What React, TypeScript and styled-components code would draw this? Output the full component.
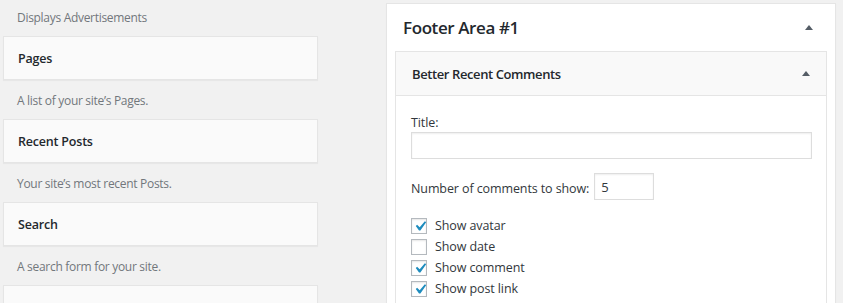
import React from 'react';
import styled, { createGlobalStyle } from 'styled-components';

const GlobalStyle = createGlobalStyle`
  html, body {
    margin: 0;
    padding: 0;
    background: #f1f1f1;
  }
  body {
    font-family: 'Open Sans', 'Noto Sans', sans-serif;
    font-size: 12.5px;
    letter-spacing: -0.1px;
    color: #23282d;
  }
`;

const Page = styled.div`
  display: flex;
  align-items: flex-start;
  width: 843px;
  height: 303px;
  overflow: hidden;
`;

const AvailableList = styled.div`
  width: 315px;
  margin-left: 3px;
  flex-shrink: 0;
`;

const WidgetTop = styled.div`
  box-sizing: border-box;
  height: 44px;
  background: #fafafa;
  border: 1px solid #e5e5e5;
  box-shadow: 0 1px 1px rgba(0, 0, 0, 0.04);
  padding: 3px 14px 0;
  display: flex;
  align-items: center;
`;

const WidgetTitle = styled.h3`
  margin: 0;
  font-size: 12.5px;
  letter-spacing: -0.2px;
  font-weight: 600;
  line-height: 1;
  color: #23282d;
`;

const Description = styled.div<{ $first?: boolean }>`
  color: #72777c;
  font-size: 12px;
  letter-spacing: -0.3px;
  line-height: 18px;
  padding: ${p => (p.$first ? '9px' : '12px')} 14px 9px 14px;
`;

const Sidebar = styled.div`
  box-sizing: border-box;
  width: 450px;
  margin-left: 68px;
  margin-top: 3px;
  background: #fff;
  border: 1px solid #e5e5e5;
  box-shadow: 0 1px 1px rgba(0, 0, 0, 0.04);
  padding: 0 8px;
  min-height: 320px;
`;

const SidebarHeader = styled.div`
  display: flex;
  align-items: center;
  justify-content: space-between;
  height: 47px;
  padding: 0 14px 0 8px;
`;

const SidebarName = styled.h2`
  margin: 0;
  font-size: 17px;
  letter-spacing: -0.4px;
  font-weight: 600;
  line-height: 1;
  color: #23282d;
`;

const Arrow = styled.span`
  display: block;
  width: 0;
  height: 0;
  border-left: 4px solid transparent;
  border-right: 4px solid transparent;
  border-bottom: 5px solid #555d66;
`;

const Widget = styled.div`
  border: 1px solid #e5e5e5;
  background: #fff;
`;

const WidgetHeader = styled.div`
  display: flex;
  align-items: center;
  justify-content: space-between;
  height: 43px;
  background: #f9f9f9;
  border-bottom: 1px solid #e5e5e5;
  padding: 0 16px;
`;

const WidgetHeaderTitle = styled.h3`
  margin: 1px 0 0;
  font-size: 13px;
  letter-spacing: -0.4px;
  font-weight: 600;
  line-height: 1;
  color: #23282d;
`;

const WidgetInside = styled.div`
  padding: 18px 14px 15px 15px;
`;

const FieldLabel = styled.label`
  display: block;
  line-height: 18px;
  color: #32373c;
`;

const TextInput = styled.input`
  box-sizing: border-box;
  display: block;
  width: 100%;
  height: 27px;
  margin: 0;
  border: 1px solid #ddd;
  box-shadow: inset 0 1px 2px rgba(0, 0, 0, 0.07);
  background: #fff;
  font-family: inherit;
  font-size: 13px;
  color: #32373c;
  padding: 0 6px;
  outline: none;
`;

const NumberRow = styled.div`
  display: flex;
  align-items: center;
  gap: 5px;
  margin-top: 14px;
`;

const InlineLabel = styled.label`
  line-height: 18px;
  color: #32373c;
  margin-top: 5px;
`;

const SmallInput = styled(TextInput)`
  width: 60px;
`;

const CheckList = styled.div`
  margin-top: 18px;
  display: flex;
  flex-direction: column;
  gap: 5px;
`;

const CheckRow = styled.label`
  display: flex;
  align-items: center;
  gap: 8px;
  height: 16px;
  line-height: 16px;
  color: #32373c;
`;

const Box = styled.span`
  box-sizing: border-box;
  display: block;
  width: 16px;
  height: 16px;
  border: 1px solid #b4b9be;
  background: #fff;
  box-shadow: inset 0 1px 2px rgba(0, 0, 0, 0.1);
  flex-shrink: 0;
`;

const Check = () => (
  <svg width="14" height="14" viewBox="2 2.6 14 14" style={{ display: 'block' }}>
    <path d="M14.83 4.89l1.34.94-5.81 8.38H9.02L5.78 9.67l1.34-1.25 2.57 2.4z" fill="#1e8cbe" />
  </svg>
);

const Checkbox: React.FC<{ checked?: boolean; label: string }> = ({ checked, label }) => (
  <CheckRow>
    <Box>{checked && <Check />}</Box>
    {label}
  </CheckRow>
);

// last box is cut off by the bottom edge, its title lies below the frame
const available = [
  { title: 'Pages', desc: 'A list of your site\u2019s Pages.' },
  { title: 'Recent Posts', desc: 'Your site\u2019s most recent Posts.' },
  { title: 'Search', desc: 'A search form for your site.' },
  { title: '', desc: '' },
];

export default function App() {
  return (
    <>
      <GlobalStyle />
      <Page>
        <AvailableList>
          <Description $first>Displays Advertisements</Description>
          {available.map((w, i) => (
            <React.Fragment key={i}>
              <WidgetTop>
                <WidgetTitle>{w.title}</WidgetTitle>
              </WidgetTop>
              {w.desc && <Description>{w.desc}</Description>}
            </React.Fragment>
          ))}
        </AvailableList>
        <Sidebar>
          <SidebarHeader>
            <SidebarName>Footer Area #1</SidebarName>
            <Arrow />
          </SidebarHeader>
          <Widget>
            <WidgetHeader>
              <WidgetHeaderTitle>Better Recent Comments</WidgetHeaderTitle>
              <Arrow />
            </WidgetHeader>
            <WidgetInside>
              <FieldLabel>Title:</FieldLabel>
              <TextInput type="text" defaultValue="" />
              <NumberRow>
                <InlineLabel>Number of comments to show:</InlineLabel>
                <SmallInput type="text" defaultValue="5" />
              </NumberRow>
              <CheckList>
                <Checkbox checked label="Show avatar" />
                <Checkbox label="Show date" />
                <Checkbox checked label="Show comment" />
                <Checkbox checked label="Show post link" />
              </CheckList>
            </WidgetInside>
          </Widget>
        </Sidebar>
      </Page>
    </>
  );
}
